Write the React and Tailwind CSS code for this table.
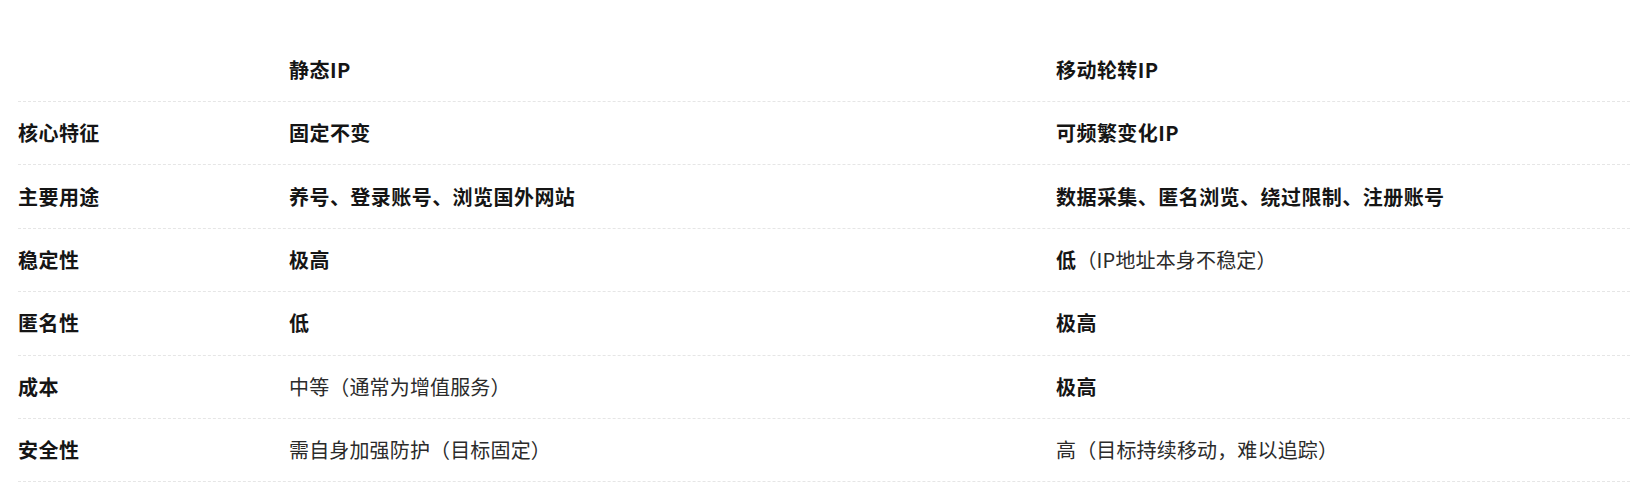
const rows = [
  { label: '核心特征', a: [['固定不变', true]], b: [['可频繁变化IP', true]] },
  { label: '主要用途', a: [['养号、登录账号、浏览国外网站', true]], b: [['数据采集、匿名浏览、绕过限制、注册账号', true]] },
  { label: '稳定性', a: [['极高', true]], b: [['低', true], ['（IP地址本身不稳定）', false]] },
  { label: '匿名性', a: [['低', true]], b: [['极高', true]] },
  { label: '成本', a: [['中等（通常为增值服务）', false]], b: [['极高', true]] },
  { label: '安全性', a: [['需自身加强防护（目标固定）', false]], b: [['高（目标持续移动，难以追踪）', false]] },
];

function Cell({ parts }) {
  return (
    <div>
      {parts.map(([text, bold], i) => (
        <span
          key={i}
          className={bold ? 'font-bold tracking-[0.45px] text-[#151515]' : 'font-normal tracking-[0.15px] text-[#2b2b2b]'}
        >
          {text}
        </span>
      ))}
    </div>
  );
}

export default function App() {
  return (
    <div
      className="bg-white w-[1630px] h-[488px] overflow-hidden pt-[41px] pl-[18px] text-[20px] leading-none"
      style={{ fontFamily: '"Microsoft YaHei", "Noto Sans CJK SC", "Noto Sans", sans-serif' }}
    >
      {/* Header */}
      <div className="grid grid-cols-[271px_767px_1fr] items-center h-[61px] pb-[3px] border-b border-dashed border-[#e6e6e6] font-bold tracking-[0.45px] text-[#151515]">
        <div></div>
        <div>静态IP</div>
        <div>移动轮转IP</div>
      </div>

      {/* Body */}
      {rows.map((row) => (
        <div
          key={row.label}
          className="grid grid-cols-[271px_767px_1fr] items-center h-[63.4px] border-b border-dashed border-[#e6e6e6]"
        >
          <div className="font-bold tracking-[0.45px] text-[#151515]">{row.label}</div>
          <Cell parts={row.a} />
          <Cell parts={row.b} />
        </div>
      ))}
    </div>
  );
}
